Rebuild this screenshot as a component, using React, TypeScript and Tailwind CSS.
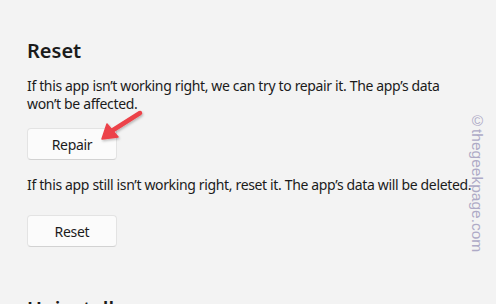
import React from 'react'

const FONT = { fontFamily: '"Noto Sans", "Open Sans", Arial, sans-serif' }

function ActionButton({ label }: { label: string }) {
  return (
    <button className="w-[90px] h-[32px] rounded-[4px] border border-[#e3e3e3] border-b-[#d2d2d2] bg-[#fbfbfb] text-[14px] tracking-[-0.3px] text-[#1b1b1b]">
      {label}
    </button>
  )
}

export default function App() {
  return (
    <div className="relative w-[496px] h-[304px] overflow-hidden bg-[#f3f3f3] text-[#1b1b1b]" style={FONT}>
      <div className="pl-[27px] pt-[37px]">
        {/* Reset section */}
        <h2 className="text-[20px] leading-[28px] font-semibold">Reset</h2>
        <p className="mt-[12px] w-[430px] text-[14px] leading-[18px] tracking-[-0.35px]">
          If this app isn’t working right, we can try to repair it. The app’s data won’t be affected.
        </p>
        <div className="mt-[15px]">
          <ActionButton label="Repair" />
        </div>
        <p className="mt-[16px] text-[14px] leading-[18px] tracking-[-0.35px] whitespace-nowrap">
          If this app still isn’t working right, reset it. The app’s data will be deleted.
        </p>
        <div className="mt-[21px]">
          <ActionButton label="Reset" />
        </div>

        {/* Uninstall section (cut off) */}
        <h2 className="mt-[48px] text-[20px] leading-[28px] font-semibold">Uninstall</h2>
      </div>

      {/* annotation arrow */}
      <svg className="absolute left-0 top-0" width="496" height="304" viewBox="0 0 496 304">
        <defs>
          <filter id="sh" x="-20%" y="-20%" width="140%" height="140%">
            <feDropShadow dx="1" dy="1.5" stdDeviation="1.2" floodColor="#000" floodOpacity="0.25" />
          </filter>
        </defs>
        <g filter="url(#sh)" fill="#ec4249" stroke="#ec4249">
          <line x1="140" y1="113" x2="110" y2="132" strokeWidth="4.5" strokeLinecap="round" />
          <polygon points="102,139 107,124 118,137" strokeWidth="1.5" strokeLinejoin="round" />
        </g>
      </svg>

      {/* watermark */}
      <div
        className="absolute left-[469px] top-[112px] text-[15.5px] leading-[16px] text-[#aeaac6]"
        style={{ writingMode: 'vertical-rl', fontFamily: '"Liberation Sans", Arial, sans-serif' }}
      >
        ©thegeekpage.com
      </div>
    </div>
  )
}
